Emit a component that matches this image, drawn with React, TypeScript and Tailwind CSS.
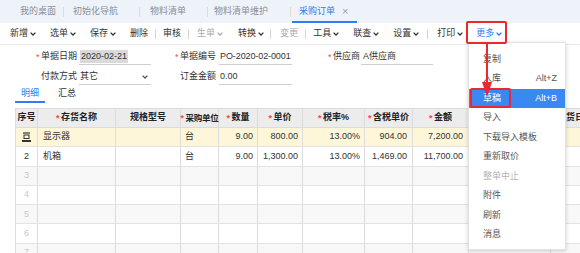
import React from 'react';

// small "˅" caret used in toolbar and select
const Caret = ({ className = '' }: { className?: string }) => (
  <svg width="6" height="4" viewBox="0 0 6 4" className={className}>
    <path d="M0.6 0.6 L3 3 L5.4 0.6" fill="none" stroke="currentColor" strokeWidth="1.3" />
  </svg>
);

const Sep = ({ className = '' }: { className?: string }) => (
  <div className={`w-px h-[10px] bg-[#d6d6d6] ${className}`} />
);

const Star = () => <span className="w-[5px] shrink-0 text-[#f04848] leading-none">*</span>;

// row edit icon in 序号 cell
const EditIcon = () => (
  <svg width="9" height="10" viewBox="0 0 9 10">
    <path d="M1 1 H8" stroke="#333" strokeWidth="1.2" />
    <rect x="2" y="3" width="5" height="3.5" fill="none" stroke="#333" strokeWidth="1" />
    <path d="M0 9 H9" stroke="#333" strokeWidth="2" />
  </svg>
);

type Row = {
  n: string;
  name: string;
  unit: string;
  qty: string;
  price: string;
  tax: string;
  tp: string;
  amt: string;
};

const rows: Row[] = [
  { n: '1', name: '显示器', unit: '台', qty: '9.00', price: '800.00', tax: '13.00%', tp: '904.00', amt: '7,200.00' },
  { n: '2', name: '机箱', unit: '台', qty: '9.00', price: '1,300.00', tax: '13.00%', tp: '1,469.00', amt: '11,700.00' },
  { n: '3', name: '', unit: '', qty: '', price: '', tax: '', tp: '', amt: '' },
  { n: '4', name: '', unit: '', qty: '', price: '', tax: '', tp: '', amt: '' },
  { n: '5', name: '', unit: '', qty: '', price: '', tax: '', tp: '', amt: '' },
  { n: '6', name: '', unit: '', qty: '', price: '', tax: '', tp: '', amt: '' },
  { n: '7', name: '', unit: '', qty: '', price: '', tax: '', tp: '', amt: '' },
];

const menu = [
  { label: '复制', key: '' },
  { label: '入库', key: 'Alt+Z' },
  { label: '草稿', key: 'Alt+B', active: true },
  { label: '导入', key: '' },
  { label: '下载导入模板', key: '' },
  { label: '重新取价', key: '' },
  { label: '整单中止', key: '', disabled: true },
  { label: '附件', key: '' },
  { label: '刷新', key: '' },
  { label: '消息', key: '' },
];

const cell = 'h-full flex items-center border-r border-[#dcdcdc] shrink-0';

export default function App() {
  return (
    <div className="relative w-[580px] h-[253px] overflow-hidden whitespace-nowrap bg-white text-[9px] text-[#333] font-['Liberation_Sans','Noto_Sans_CJK_SC',sans-serif]">
      {/* tab bar */}
      <div className="h-[23px] bg-[#eef2f9] flex items-center text-[#8a8f99]">
        <span className="ml-[20px]">我的桌面</span>
        <Sep className="ml-[7px] bg-[#d8dce6]" />
        <span className="ml-[9px]">初始化导航</span>
        <Sep className="ml-[21px] bg-[#d8dce6]" />
        <span className="ml-[10px]">物料清单</span>
        <Sep className="ml-[21px] bg-[#d8dce6]" />
        <span className="ml-[6px]">物料清单维护</span>
        <Sep className="ml-[22px] bg-[#d8dce6]" />
        <div className="ml-px h-full flex items-center pl-[7px] pr-[8px] border-b-2 border-[#2e7cf6] pt-[2px]">
          <span className="text-[#2e7cf6]">采购订单</span>
          <span className="ml-[7px] text-[11px] text-[#9aa0aa] leading-none">×</span>
        </div>
      </div>

      {/* toolbar */}
      <div className="h-[22px] flex items-center border-b border-[#e8e8e8]">
        <span className="ml-[10px] flex items-center">新增<Caret className="ml-[2px]" /></span>
        <span className="ml-[14px] flex items-center">选单<Caret className="ml-[2px]" /></span>
        <span className="ml-[14px] flex items-center">保存<Caret className="ml-[2px]" /></span>
        <span className="ml-[14px]">删除</span>
        <Sep className="ml-[7px]" />
        <span className="ml-[7px]">审核</span>
        <Sep className="ml-[7px]" />
        <span className="ml-[8px] flex items-center text-[#aaa]">生单<Caret className="ml-[2px]" /></span>
        <span className="ml-[15px] flex items-center">转换<Caret className="ml-[2px]" /></span>
        <Sep className="ml-[6px]" />
        <span className="ml-[9px] text-[#aaa]">变更</span>
        <Sep className="ml-[7px]" />
        <span className="ml-[7px] flex items-center">工具<Caret className="ml-[2px]" /></span>
        <span className="ml-[14px] flex items-center">联查<Caret className="ml-[2px]" /></span>
        <span className="ml-[14px] flex items-center">设置<Caret className="ml-[2px]" /></span>
        <Sep className="ml-[8px]" />
        <span className="ml-[9px] flex items-center">打印<Caret className="ml-[2px]" /></span>
        <span className="ml-[13px] flex items-center text-[#2e7cf6]">更多<Caret className="ml-[2px]" /></span>
      </div>

      {/* header form */}
      <div className="pt-[2px]">
        <div className="h-[20px] flex items-center">
          <div className="ml-[36px] flex items-center">
            <Star />
            <span>单据日期</span>
          </div>
          <div className="ml-[2px] w-[72px] h-[15px] border-b border-[#cfcfcf] flex items-center pl-px">
            <span className="bg-[#d9d9d9] px-px">2020-02-21</span>
          </div>
          <div className="ml-[24px] flex items-center">
            <Star />
            <span>单据编号</span>
          </div>
          <div className="ml-[3px] w-[73px] h-[15px] border-b border-[#cfcfcf] flex items-center pl-px tracking-[-0.1px]">PO-2020-02-0001</div>
          <div className="ml-[36px] flex items-center">
            <Star />
            <span>供应商</span>
          </div>
          <div className="ml-px w-[72px] h-[15px] border-b border-[#cfcfcf] flex items-center pl-[2px]">A供应商</div>
        </div>
        <div className="h-[20px] flex items-center">
          <span className="ml-[41px]">付款方式</span>
          <div className="ml-[2px] w-[72px] h-[15px] border-b border-[#cfcfcf] flex items-center justify-between pl-px pr-[3px]">
            <span>其它</span>
            <Caret className="text-[#555]" />
          </div>
          <span className="ml-[29px]">订金金额</span>
          <div className="ml-[3px] w-[73px] h-[15px] border-b border-[#cfcfcf] flex items-center pl-px">0.00</div>
        </div>
      </div>

      {/* detail tabs */}
      <div className="h-[16px] flex">
        <div className="ml-[15px] w-[30px] h-full flex items-center justify-center border-b-2 border-[#2e7cf6] text-[#2e7cf6]">明细</div>
        <div className="ml-[13px] h-full flex items-center pb-[2px]">汇总</div>
      </div>

      {/* grid */}
      <div className="mt-[5px] ml-[15px] w-[615px] border-t border-l border-[#dcdcdc]">
        <div className="flex h-[19px] bg-[#ececec] border-b border-[#dcdcdc] font-bold text-[#222]">
          <div className={`${cell} w-[22px] justify-center`}>序号</div>
          <div className={`${cell} w-[78px] justify-center`}><Star />存货名称</div>
          <div className={`${cell} w-[65px] justify-center`}>规格型号</div>
          <div className={`${cell} w-[38px] justify-center text-[8.5px] tracking-[-0.3px]`}><Star />采购单位</div>
          <div className={`${cell} w-[39px] justify-center`}><Star />数量</div>
          <div className={`${cell} w-[45px] justify-center`}><Star />单价</div>
          <div className={`${cell} w-[62px] justify-center`}><Star />税率%</div>
          <div className={`${cell} w-[48px] justify-center`}><Star />含税单价</div>
          <div className={`${cell} w-[56px] justify-center`}><Star />金额</div>
          <div className={`${cell} w-[82px] justify-center`}>备注</div>
          <div className={`${cell} w-[80px] pl-[6px]`}>到货日期</div>
        </div>
        {rows.map((r, i) => (
          <div
            key={r.n}
            className={`flex h-[19.3px] border-b border-[#e2e2e2] ${
              i === 0 ? 'bg-[#fdf6d9]' : i % 2 === 1 ? 'bg-white' : 'bg-[#f8f8f8]'
            }`}
          >
            <div className={`${cell} w-[22px] justify-center ${i < 2 ? 'text-[#333]' : 'text-[#c8c8c8]'}`}>
              {i === 0 ? <EditIcon /> : r.n}
            </div>
            <div className={`${cell} w-[78px] pl-[5px]`}>{r.name}</div>
            <div className={`${cell} w-[65px]`} />
            <div className={`${cell} w-[38px] pl-[4px]`}>{r.unit}</div>
            <div className={`${cell} w-[39px] justify-end pr-[4px]`}>{r.qty}</div>
            <div className={`${cell} w-[45px] justify-end pr-[4px]`}>{r.price}</div>
            <div className={`${cell} w-[62px] justify-end pr-[4px]`}>{r.tax}</div>
            <div className={`${cell} w-[48px] justify-end pr-[5px]`}>{r.tp}</div>
            <div className={`${cell} w-[56px] justify-end pr-[5px]`}>{r.amt}</div>
            <div className={`${cell} w-[82px]`} />
            <div className={`${cell} w-[80px]`} />
          </div>
        ))}
      </div>

      {/* 更多 dropdown */}
      <div className="absolute left-[468px] top-[42px] w-[98px] h-[208px] bg-white border border-[#e3e3e3] shadow-[0_1px_4px_rgba(0,0,0,0.18)] pt-[6.5px]">
        {menu.map((m) => (
          <div
            key={m.label}
            className={`h-[19.5px] flex items-center justify-between pl-[14px] pr-[8px] ${
              m.active ? 'bg-[#3a89f2] text-white' : m.disabled ? 'text-[#b5b5b5]' : 'text-[#555]'
            }`}
          >
            <span>{m.label}</span>
            <span>{m.key}</span>
          </div>
        ))}
      </div>

      {/* annotation: red boxes and arrow */}
      <div className="absolute left-[466px] top-[21px] w-[41px] h-[23px] border-2 border-[#e8292e] rounded-[2px]" />
      <div className="absolute left-[470px] top-[88px] w-[41px] h-[20px] border-2 border-[#e8292e] rounded-[2px]" />
      <svg className="absolute left-[481px] top-[44px]" width="12" height="56" viewBox="0 0 12 56">
        <path d="M6 0 V42" stroke="#e8292e" strokeWidth="2" />
        <polygon points="1,38 11,38 6,53" fill="#e8292e" />
      </svg>
    </div>
  );
}
